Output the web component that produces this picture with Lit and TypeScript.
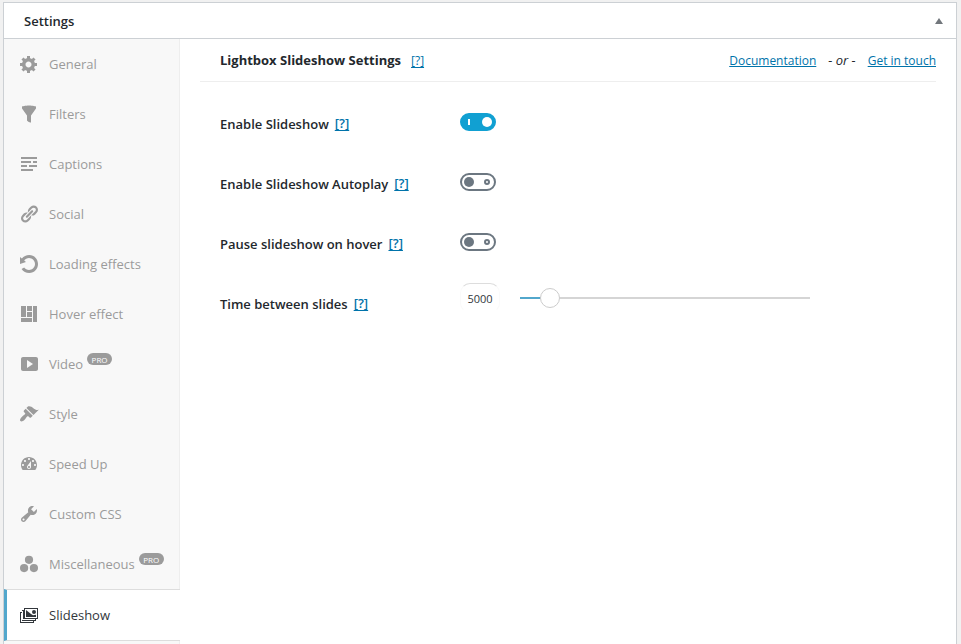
import { LitElement, html, css, svg, nothing, type SVGTemplateResult } from "lit";
import { customElement, property, state } from "lit/decorators.js";
import { classMap } from "lit/directives/class-map.js";
import { styleMap } from "lit/directives/style-map.js";

const p = (d: string) => svg`<path fill-rule="evenodd" d=${d}></path>`;

const ICONS: Record<string, SVGTemplateResult> = {
  general: p("M18 12h-2.18c-.17.7-.44 1.35-.81 1.93l1.54 1.54-2.1 2.1-1.54-1.54c-.58.36-1.23.63-1.91.79V19H8v-2.18c-.68-.16-1.33-.43-1.91-.79l-1.54 1.54-2.12-2.12 1.54-1.54c-.36-.58-.63-1.23-.79-1.91H1V9.03h2.17c.16-.7.44-1.35.8-1.94L2.43 5.55l2.1-2.1 1.54 1.54c.58-.37 1.24-.64 1.93-.81V2h3v2.18c.68.16 1.33.43 1.91.79l1.54-1.54 2.12 2.12-1.54 1.54c.36.59.64 1.24.8 1.94H18V12zm-8.5 1.5c1.66 0 3-1.34 3-3s-1.34-3-3-3-3 1.34-3 3 1.34 3 3 3z"),
  filters: p("M3 4.5v-2s3.34-1 7-1 7 1 7 1v2l-5 7.03v6.97s-1.22-.09-2.25-.59S8 16.5 8 16.5v-4.97z"),
  captions: p("M18 3v2H2V3h16zm-6 4v2H2V7h10zm6 0v2h-4V7h4zM8 11v2H2v-2h6zm10 0v2h-8v-2h8zm-4 4v2H2v-2h12z"),
  social: p("M17.74 2.76c1.68 1.69 1.68 4.41 0 6.1l-1.53 1.52c-1.12 1.12-2.7 1.47-4.14 1.09l2.62-2.61.76-.77.76-.76c.84-.84.84-2.2 0-3.04-.84-.85-2.2-.85-3.04 0l-.77.76-3.38 3.38c-.37-1.44-.02-3.02 1.1-4.14l1.52-1.53c1.69-1.68 4.42-1.68 6.1 0zM8.59 13.43l5.34-5.34c.42-.42.42-1.1 0-1.52-.44-.43-1.13-.39-1.53 0l-5.33 5.34c-.42.42-.42 1.1 0 1.52.44.43 1.13.39 1.52 0zm-.76 2.29l4.14-4.15c.38 1.44.03 3.02-1.09 4.14l-1.52 1.53c-1.69 1.68-4.41 1.68-6.1 0-1.68-1.68-1.68-4.42 0-6.1l1.53-1.52c1.12-1.12 2.7-1.47 4.14-1.1l-4.14 4.15c-.85.84-.85 2.2 0 3.05.84.84 2.2.84 3.04 0z"),
  loading: p("M10.25 1.02c5.1 0 8.75 4.04 8.75 9s-3.65 9-8.75 9c-3.2 0-6.02-1.59-7.68-3.99l2.59-1.52c1.1 1.5 2.86 2.51 4.84 2.51 3.3 0 6-2.79 6-6s-2.7-6-6-6c-1.97 0-3.72 1-4.82 2.49L7 8.02l-6 2v-7L2.89 4.6c1.69-2.17 4.36-3.58 7.36-3.58z"),
  hover: p("M2 2h5v11H2V2zm6 0h5v5H8V2zm6 0h4v16h-4V2zM8 8h5v5H8V8zm-6 6h11v4H2v-4z"),
  video: p("M19 15V5c0-1.1-.9-2-2-2H4c-1.1 0-2 .9-2 2v10c0 1.1.9 2 2 2h13c1.1 0 2-.9 2-2zM8 14V6l6 4z"),
  style: p("M14.48 11.06L7.41 3.99l1.5-1.5c.5-.56 2.3-.47 3.51.32 1.21.8 1.43 1.28 2.91 2.1 1.18.64 2.45 1.26 4.45.85zm-.71.71L6.7 4.7 4.93 6.47c-.39.39-.39 1.02 0 1.41l1.06 1.06c.39.39.39 1.03 0 1.42-.6.6-1.43 1.11-2.21 1.69-.35.26-.7.53-1.01.84C1.43 14.23.4 16.08 1.4 17.07c.99 1 2.84-.03 4.18-1.36.31-.31.58-.66.85-1.02.57-.78 1.08-1.61 1.69-2.21.39-.39 1.02-.39 1.41 0l1.06 1.06c.39.39 1.02.39 1.41 0z"),
  speed: p("M3.76 16h12.48c1.1-1.37 1.76-3.11 1.76-5 0-4.42-3.58-8-8-8s-8 3.58-8 8c0 1.89.66 3.63 1.76 5zM10 4c.55 0 1 .45 1 1s-.45 1-1 1-1-.45-1-1 .45-1 1-1zM6 6c.55 0 1 .45 1 1s-.45 1-1 1-1-.45-1-1 .45-1 1-1zm8 0c.55 0 1 .45 1 1s-.45 1-1 1-1-.45-1-1 .45-1 1-1zm-5.37 5.55L12 7v6c0 1.1-.9 2-2 2s-2-.9-2-2c0-.57.24-1.08.63-1.45zM4 10c.55 0 1 .45 1 1s-.45 1-1 1-1-.45-1-1 .45-1 1-1zm12 0c.55 0 1 .45 1 1s-.45 1-1 1-1-.45-1-1 .45-1 1-1zm-5 3c0-.55-.45-1-1-1s-1 .45-1 1 .45 1 1 1 1-.45 1-1z"),
  css: p("M16.68 9.77c-1.34 1.34-3.3 1.67-4.95.99l-5.41 6.52c-.99.99-2.59.99-3.58 0s-.99-2.59 0-3.57l6.52-5.42c-.68-1.65-.35-3.61.99-4.95 1.28-1.28 3.12-1.62 4.72-1.06l-2.89 2.89 2.82 2.82 2.86-2.87c.53 1.58.18 3.39-1.08 4.65zM3.81 16.21c.4.39 1.04.39 1.43 0 .4-.4.4-1.04 0-1.43-.39-.4-1.03-.4-1.43 0-.39.39-.39 1.03 0 1.43z"),
  misc: svg`<circle cx="10" cy="5.8" r="4.1"></circle><circle cx="5.1" cy="14.1" r="4.1"></circle><circle cx="14.9" cy="14.1" r="4.1"></circle>`,
  slideshow: p("M5 3h14v11h-2v2h-2v2H1V7h2V5h2V3zm1 1v9h12V4H6zM4 6v8h12v1H3V6h1zM2 8h0v9h12v-1H3V8H2zM7 5l5 4 2 1.2 3-.4V12H7V5zm8 0a2 2 0 1 1 0 4 2 2 0 0 1 0-4z"),
};

interface MenuEntry { icon: string; label: string; pro?: boolean }

const MENU: MenuEntry[] = [
  { icon: "general", label: "General" },
  { icon: "filters", label: "Filters" },
  { icon: "captions", label: "Captions" },
  { icon: "social", label: "Social" },
  { icon: "loading", label: "Loading effects" },
  { icon: "hover", label: "Hover effect" },
  { icon: "video", label: "Video", pro: true },
  { icon: "style", label: "Style" },
  { icon: "speed", label: "Speed Up" },
  { icon: "css", label: "Custom CSS" },
  { icon: "misc", label: "Miscellaneous", pro: true },
  { icon: "slideshow", label: "Slideshow" },
];

@customElement("settings-menu")
export class SettingsMenu extends LitElement {
  @property() active = "slideshow";

  static styles = css`
    :host { display: block; }
    .menu { display: flex; flex-direction: column; min-height: 100%; }
    .item {
      display: flex; align-items: center; box-sizing: border-box; height: 50px;
      padding: 0 0 0 15px; border-right: 1px solid #eee;
      color: #9b9b9b; text-decoration: none; font-size: 13px; line-height: 20px;
    }
    .icon { width: 20px; height: 20px; margin-right: 10px; fill: currentColor; flex: none; }
    .active {
      height: 52px; padding-left: 12px; background: #fff; color: #32373c;
      border: 0 solid #ddd; border-width: 1px 0; border-left: 3px solid #52a7cc;
    }
    .pro {
      align-self: flex-start; margin: 14px 0 0 4px; width: 25px; height: 12px;
      border-radius: 6px; background: #9b9b9b; color: #fff;
      font-size: 8px; line-height: 13px; text-align: center;
    }
    .rest { flex: 1; border-right: 1px solid #eee; }
  `;

  render() {
    return html`<nav class="menu" aria-label="Settings sections">
      ${MENU.map((m) => html`<a href="#${m.icon}"
        class=${classMap({ item: true, active: m.icon === this.active })}
        @click=${(e: Event) => { e.preventDefault(); this.active = m.icon; }}
        ><svg class="icon" viewBox="0 0 20 20" aria-hidden="true">${ICONS[m.icon]}</svg
        ><span>${m.label}</span>${m.pro ? html`<span class="pro">PRO</span>` : nothing}</a>`)}
      <div class="rest"></div>
    </nav>`;
  }
}

@customElement("app-root")
export class AppRoot extends LitElement {
  @state() private time = 5000;
  private readonly min = 1000;
  private readonly max = 40000;

  static styles = css`
    :host {
      display: flex; box-sizing: border-box; min-height: 100vh; padding: 2px 4px 0 3px;
      background: #f1f1f1; color: #23282d;
      font-family: "Open Sans", "Noto Sans", sans-serif; font-size: 13px; line-height: 20px;
    }
    .box {
      flex: 1; display: flex; flex-direction: column; background: #fff;
      border: 1px solid #ccd0d4; border-bottom: 0;
    }
    .head {
      display: flex; align-items: center; justify-content: space-between;
      height: 35px; padding: 0 12px 0 20px; border-bottom: 1px solid #ccd0d4;
    }
    .head-title { margin: 0; font-size: 13px; font-weight: 600; }
    .toggle { display: flex; padding: 0; border: 0; background: none; cursor: pointer; }
    .caret { width: 10px; height: 10px; fill: #72777c; }
    .body { flex: 1; display: flex; }
    .side { width: 176px; flex: none; background: #f8f8f8; }
    .content { flex: 1; padding: 0 20px; }
    .bar {
      display: flex; align-items: center; justify-content: space-between;
      height: 42px; padding-left: 20px; border-bottom: 1px solid #eee;
    }
    .title { margin: 0; font-size: 13px; font-weight: 700; }
    a { color: #0073aa; }
    .help { margin-left: 6px; text-underline-offset: 2px; text-decoration-skip-ink: none; }
    .title .help { margin-left: 10px; font-size: 12px; font-weight: 400; }
    .links { display: flex; align-items: baseline; gap: 12px; }
    .links a { font-size: 12px; }
    .rows { display: flex; flex-direction: column; padding: 12px 0 0 20px; }
    .row { display: grid; grid-template-columns: 240px 1fr; align-items: center; height: 60px; }
    .name { display: flex; align-items: flex-start; }
    .name .help { line-height: 18px; font-weight: 600; }
    .label { font-weight: 600; }
    .field { display: flex; align-items: center; padding-bottom: 4px; }
    .slider { padding-bottom: 12px; }
    .switch {
      appearance: none; position: relative; box-sizing: border-box; width: 36px; height: 18px;
      margin: 0; border: 2px solid #6c7781; border-radius: 9px; background: #fff;
    }
    .switch::before {
      content: ""; position: absolute; left: 2px; top: 2px; width: 10px; height: 10px;
      border-radius: 50%; background: #6c7781;
    }
    .switch::after {
      content: ""; position: absolute; right: 4px; top: 4px; box-sizing: border-box;
      width: 6px; height: 6px; border: 2px solid #6c7781; border-radius: 50%;
    }
    .switch:checked { background: #11a0d2; border-color: #11a0d2; }
    .switch:checked::before { left: auto; right: 2px; background: #fff; }
    .switch:checked::after {
      right: auto; left: 6px; width: 2px; border: 0; border-radius: 0; background: #fff;
    }
    .number {
      appearance: none; box-sizing: border-box; width: 40px; height: 30px; margin: 0; padding: 0;
      border: 1px solid #fafafa; border-top-color: #ddd; border-bottom-color: transparent;
      border-radius: 10px; background: none;
      font: inherit; font-size: 11px; color: #32373c; text-align: center;
    }
    .range {
      appearance: none; width: 310px; height: 20px; margin: 0 0 0 10px;
      background: linear-gradient(to right, #52a7cc var(--fill), #d5d5d5 var(--fill))
        center / calc(100% - 20px) 2px no-repeat;
    }
    .range::-webkit-slider-thumb {
      appearance: none; box-sizing: border-box; width: 20px; height: 20px;
      border: 1px solid #ccc; border-radius: 50%; background: #fff;
    }
  `;

  private help(topic: string) {
    return html`<a class="help" href="#help" title="Help: ${topic}">[?]</a>`;
  }

  private switchRow(id: string, label: string, on: boolean) {
    return html`<div class="row">
      <div class="name"><label class="label" for=${id}>${label}</label>${this.help(label)}</div>
      <div class="field"><input class="switch" type="checkbox" id=${id} ?checked=${on}></div>
    </div>`;
  }

  private setTime(e: Event) {
    this.time = Number((e.target as HTMLInputElement).value);
  }

  render() {
    const fill = ((this.time - this.min) / (this.max - this.min)) * 100;
    return html`<section class="box">
      <header class="head">
        <h2 class="head-title">Settings</h2>
        <button class="toggle" type="button" aria-label="Toggle panel">
          <svg class="caret" viewBox="0 0 10 10"><path d="M5 2l4 6H1z"></path></svg>
        </button>
      </header>
      <div class="body">
        <settings-menu class="side"></settings-menu>
        <main class="content">
          <div class="bar">
            <h3 class="title">Lightbox Slideshow Settings${this.help("Lightbox Slideshow Settings")}</h3>
            <div class="links">
              <a href="#documentation">Documentation</a><em>- or -</em><a href="#contact">Get in touch</a>
            </div>
          </div>
          <form class="rows">
            ${this.switchRow("enable", "Enable Slideshow", true)}
            ${this.switchRow("autoplay", "Enable Slideshow Autoplay", false)}
            ${this.switchRow("pause", "Pause slideshow on hover", false)}
            <div class="row">
              <div class="name"><label class="label" for="time">Time between slides</label>${this.help("Time between slides")}</div>
              <div class="field slider">
                <input class="number" id="time" type="text" inputmode="numeric" .value=${String(this.time)} @change=${this.setTime}>
                <input class="range" type="range" aria-label="Time between slides" min=${this.min} max=${this.max} step="100"
                  .value=${String(this.time)} style=${styleMap({ "--fill": `${fill}%` })} @input=${this.setTime}>
              </div>
            </div>
          </form>
        </main>
      </div>
    </section>`;
  }
}
